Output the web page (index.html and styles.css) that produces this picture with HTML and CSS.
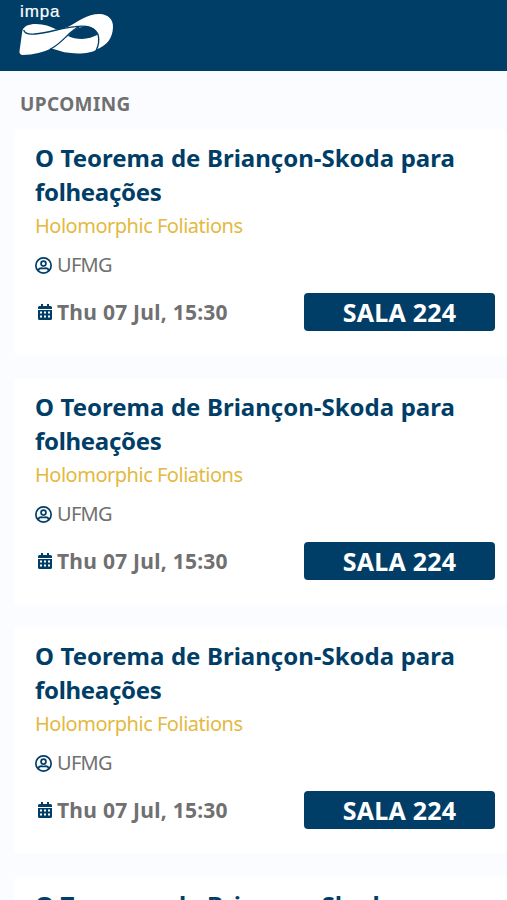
FILE: index.html
```html
<!DOCTYPE html>
<html lang="pt-BR">
<head>
    <meta charset="UTF-8">
    <title>IMPA - Upcoming</title>
    <link rel="stylesheet" href="styles.css">
</head>
<body>
<!-- icons -->
<svg class="sprite">
    <symbol id="user" viewBox="0 0 16 16">
        <circle cx="8" cy="8" r="7.2" fill="none" stroke="currentColor" stroke-width="1.6"/>
        <circle cx="8" cy="6.2" r="2.3" fill="none" stroke="currentColor" stroke-width="1.6"/>
        <path d="M3 13C3.400 11.200 4.500 10.500 6 10.500C7.300 10.900 8.700 10.900 10 10.500C11.500 10.500 12.600 11.200 13 13" fill="none" stroke="currentColor" stroke-width="1.6"/>
    </symbol>
    <symbol id="calendar" viewBox="0 0 14 16">
        <path fill="currentColor" fill-rule="evenodd" d="M3 0h2v2h4V0h2v2h1.500Q14 2 14 3.500V5H0V3.500Q0 2 1.500 2H3zM0 6h14v8.500q0 1.500-1.500 1.500h-11Q0 16 0 14.500zM2 7.500v2h2v-2zM6 7.500v2h2v-2zM10 7.500v2h2v-2zM2 11.500v2h2v-2zM6 11.500v2h2v-2zM10 11.500v2h2v-2z"/>
    </symbol>
</svg>

<header class="header">
    <div class="logo">
        <span class="logo-name">impa</span>
        <svg class="logo-mark" viewBox="57 67 285 102">
            <path fill="#fff" fill-rule="evenodd" d="M203 82C235 66 260 43 299 43C325 44 340 60 339 83C338 116 320 139 288 150C273 162 230 164 193 158L153 146C132 158 101 166 67 166C60 165 57 161 59 151L67 93C72 79 86 73 108 73C132 74 151 79 168 89C181 90 192 86 203 82ZM204 109C218 92 237 82 257 80C274 80 288 88 293 105C280 112 263 117 246 118C230 118 215 115 204 109Z"/>
            <path fill="none" stroke="#003e68" stroke-width="4" d="M71 91C74 101 87 105 105 103C150 99 184 84 226 81C259 75 288 84 295 108C298 124 296 137 289 151M238 82C207 93 187 132 151 148"/>
        </svg>
    </div>
</header>

<main class="content">
    <h2 class="section-title">UPCOMING</h2>
    <div class="list">
        <article class="card">
            <h3 class="title">O Teorema de Briançon-Skoda para <span class="line">folheações</span></h3>
            <p class="subject">Holomorphic Foliations</p>
            <p class="speaker"><svg class="icon-user"><use href="#user"/></svg><span>UFMG</span></p>
            <div class="row">
                <p class="date"><svg class="icon-calendar"><use href="#calendar"/></svg><span>Thu 07 Jul, 15:30</span></p>
                <span class="room">SALA 224</span>
            </div>
        </article>
        <article class="card">
            <h3 class="title">O Teorema de Briançon-Skoda para <span class="line">folheações</span></h3>
            <p class="subject">Holomorphic Foliations</p>
            <p class="speaker"><svg class="icon-user"><use href="#user"/></svg><span>UFMG</span></p>
            <div class="row">
                <p class="date"><svg class="icon-calendar"><use href="#calendar"/></svg><span>Thu 07 Jul, 15:30</span></p>
                <span class="room">SALA 224</span>
            </div>
        </article>
        <article class="card">
            <h3 class="title">O Teorema de Briançon-Skoda para <span class="line">folheações</span></h3>
            <p class="subject">Holomorphic Foliations</p>
            <p class="speaker"><svg class="icon-user"><use href="#user"/></svg><span>UFMG</span></p>
            <div class="row">
                <p class="date"><svg class="icon-calendar"><use href="#calendar"/></svg><span>Thu 07 Jul, 15:30</span></p>
                <span class="room">SALA 224</span>
            </div>
        </article>
        <article class="card card-last">
            <h3 class="title">O Teorema de Briançon-Skoda para</h3>
        </article>
    </div>
</main>
</body>
</html>
```

FILE: styles.css
```css
* {
    margin: 0;
    padding: 0;
    box-sizing: border-box;
}

body {
    height: 900px;
    overflow: hidden;
    background: #fbfcff;
    color: #707070;
    font-family: "Noto Sans", "Open Sans", sans-serif;
}

.sprite {
    display: none;
}

.header {
    height: 71px;
    padding: 3px 19px 0;
    background: #003e68;
}

.logo {
    display: flex;
    flex-direction: column;
}

.logo-name {
    height: 19px;
    padding-left: 1px;
    color: #fff;
    font: 17px/18px "Liberation Sans", Arial, sans-serif;
    letter-spacing: 0.9px;
    -webkit-text-stroke: 0.2px #fff;
}

.logo-mark {
    width: 95px;
    height: 34px;
    overflow: visible;
}

.content {
    height: 829px;
    padding: 20px 0 0 15px;
    overflow: hidden;
}

.section-title {
    padding-left: 5px;
    margin-bottom: 13px;
    font-size: 19px;
    line-height: 26px;
    letter-spacing: 0.4px;
}

.list {
    display: flex;
    flex-direction: column;
    gap: 24px;
}

.card {
    height: 225px;
    padding: 11px 12px 0 20px;
    background: #fff;
    box-shadow: 0 0 5px #fff;
}

.card-last {
    height: 23px;
    overflow: hidden;
}

.title {
    color: #003e68;
    font-size: 24px;
    line-height: 34px;
    word-spacing: 0.3px;
}

.line {
    letter-spacing: -0.3px;
}

.subject {
    color: #e3b93f;
    font-size: 20px;
    line-height: 33px;
    letter-spacing: -0.49px;
}

.speaker {
    display: flex;
    align-items: center;
    gap: 5px;
    margin-top: 9px;
    font-size: 20px;
    line-height: 28px;
    letter-spacing: -0.7px;
}

.icon-user {
    width: 17px;
    height: 17px;
    color: #003e68;
}

.row {
    display: flex;
    justify-content: space-between;
    align-items: center;
    margin-top: 14px;
}

.date {
    display: flex;
    align-items: center;
    gap: 5px;
    padding-left: 3px;
    font-size: 21px;
    font-weight: bold;
    line-height: 38px;
    letter-spacing: 0.25px;
}

.icon-calendar {
    width: 14px;
    height: 16px;
    color: #003e68;
}

.room {
    width: 191px;
    height: 38px;
    border-radius: 4px;
    background: #003e68;
    color: #fff;
    font-size: 25px;
    font-weight: bold;
    line-height: 39px;
    letter-spacing: 0.2px;
    text-align: center;
}
```
